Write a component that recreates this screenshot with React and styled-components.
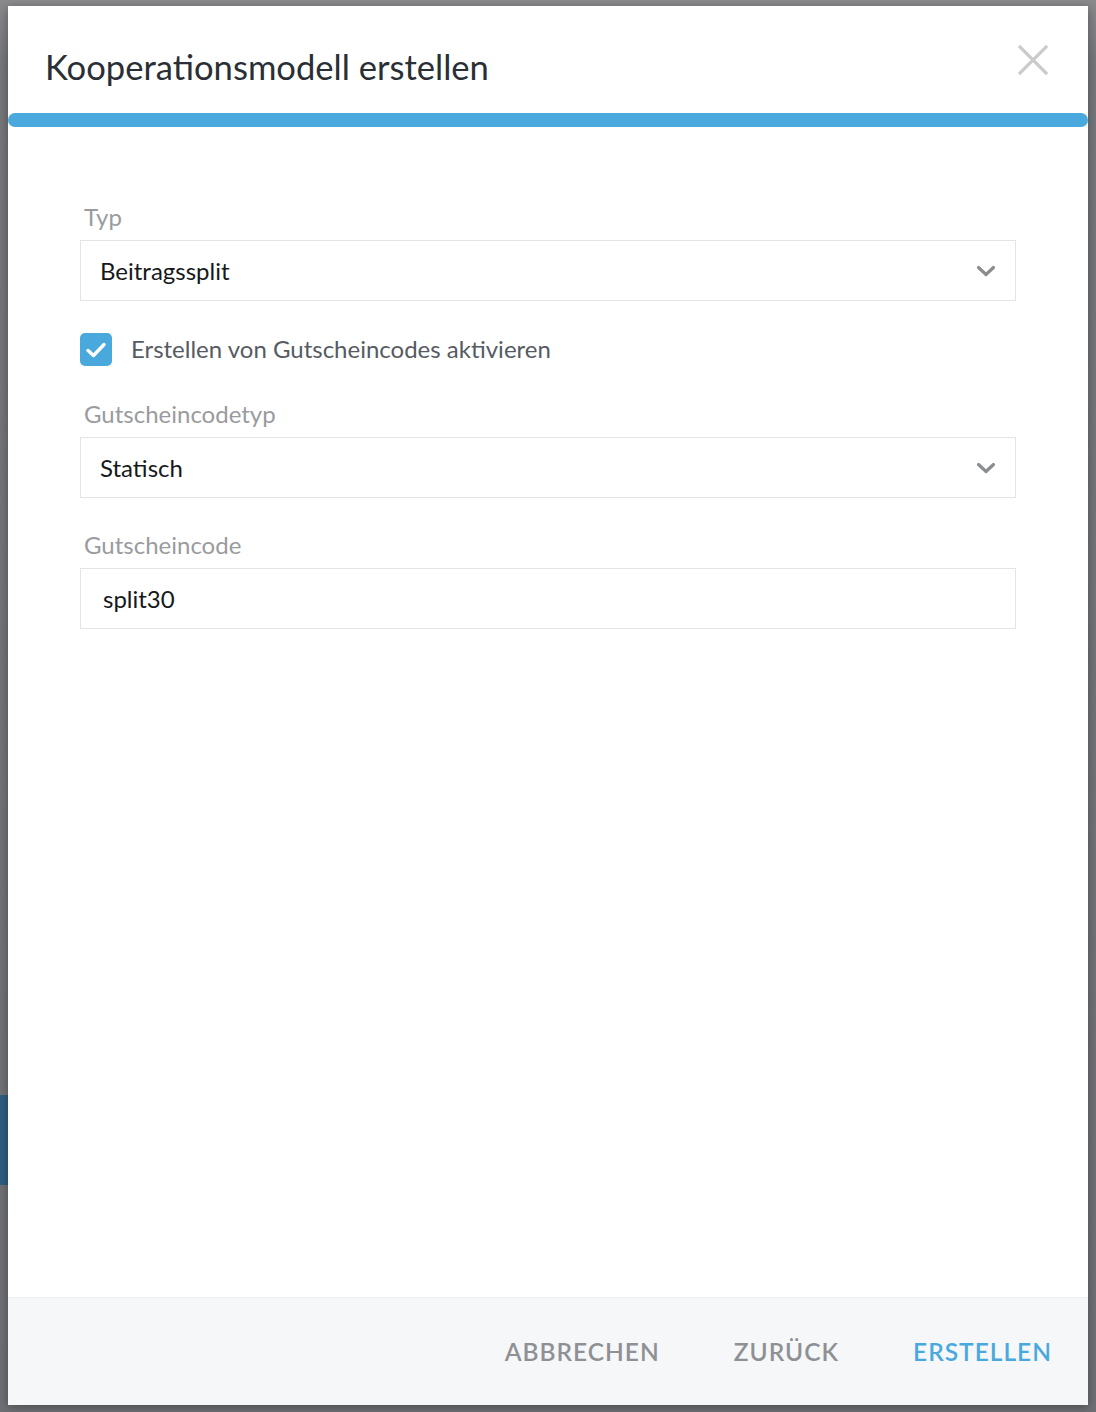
import React from 'react'
import styled, { createGlobalStyle } from 'styled-components'

const GlobalStyle = createGlobalStyle`
  html, body {
    margin: 0;
    padding: 0;
  }
  body {
    background: #707176;
    font-family: "Lato", "Liberation Sans", sans-serif;
  }
`

const ChevronDown = () => (
  <svg width="20" height="12" viewBox="0 0 20 12" fill="none">
    <path d="M2.5 2.5 L10 9.5 L17.5 2.5" stroke="#8c8d91" strokeWidth="3.2" strokeLinecap="round" strokeLinejoin="round" />
  </svg>
)

const CloseIcon = () => (
  <svg width="30" height="30" viewBox="0 0 30 30" fill="none">
    <path d="M2 2 L28 28 M28 2 L2 28" stroke="#cbcbcb" strokeWidth="3.2" strokeLinecap="square" />
  </svg>
)

const CheckIcon = () => (
  <svg width="22" height="18" viewBox="0 0 22 18" fill="none">
    <path d="M3 9.5 L8.5 14.5 L19 3.5" stroke="#ffffff" strokeWidth="3.4" strokeLinecap="round" strokeLinejoin="round" />
  </svg>
)

const App = () => {
  return (
    <>
      <GlobalStyle />
      <Backdrop>
        <SideStrip>
          <SideBar />
        </SideStrip>
        <Modal>
          <Header>
            <Title>Kooperationsmodell erstellen</Title>
            <CloseButton aria-label="Schließen">
              <CloseIcon />
            </CloseButton>
          </Header>
          <Progress />
          <Body>
            <Field>
              <Label>Typ</Label>
              <SelectBox>
                <Value>Beitragssplit</Value>
                <ChevronDown />
              </SelectBox>
            </Field>
            <CheckRow>
              <Checkbox>
                <CheckIcon />
              </Checkbox>
              <CheckLabel>Erstellen von Gutscheincodes aktivieren</CheckLabel>
            </CheckRow>
            <Field>
              <Label>Gutscheincodetyp</Label>
              <SelectBox>
                <Value>Statisch</Value>
                <ChevronDown />
              </SelectBox>
            </Field>
            <Field $top={34}>
              <Label>Gutscheincode</Label>
              <InputBox>
                <Value $indent={3}>split30</Value>
              </InputBox>
            </Field>
          </Body>
          <Footer>
            <FooterButton>ABBRECHEN</FooterButton>
            <FooterButton>ZURÜCK</FooterButton>
            <FooterButton $primary>ERSTELLEN</FooterButton>
          </Footer>
        </Modal>
      </Backdrop>
    </>
  )
}

export default App

const Backdrop = styled.div`
  position: relative;
  width: 1096px;
  height: 1412px;
  padding: 6px 8px 7px 8px;
  box-sizing: border-box;
  background: linear-gradient(to bottom, #8b8b8e 0px, #77787c 60px, #6f7075 100%);
  overflow: hidden;
`

const SideStrip = styled.div`
  position: absolute;
  left: 0;
  top: 0;
  bottom: 0;
  width: 8px;
  display: flex;
  flex-direction: column;
  justify-content: flex-end;
  padding-bottom: 227px;
`

const SideBar = styled.div`
  height: 90px;
  background: #2f5f82;
`

const Modal = styled.div`
  position: relative;
  height: 100%;
  background: #ffffff;
  display: flex;
  flex-direction: column;
  box-shadow: 0 2px 10px rgba(0, 0, 0, 0.35);
`

const Header = styled.div`
  height: 107px;
  display: flex;
  align-items: flex-start;
  justify-content: space-between;
  padding: 0 40px 0 37px;
`

const Title = styled.h1`
  margin: 38px 0 0 0;
  font-size: 34.6px;
  font-weight: 400;
  line-height: 46px;
  color: #2a2f36;
`

const CloseButton = styled.button`
  margin-top: 39px;
  padding: 0;
  border: none;
  background: none;
  width: 30px;
  height: 30px;
  cursor: pointer;
`

const Progress = styled.div`
  height: 14px;
  border-radius: 7px;
  background: #4aa9dc;
`

const Body = styled.div`
  flex: 1;
  padding: 77px 72px 0 72px;
  display: flex;
  flex-direction: column;
`

const Field = styled.div`
  display: flex;
  flex-direction: column;
  gap: 10px;
  margin-top: ${p => p.$top || 0}px;
`

const Label = styled.div`
  padding-left: 4px;
  font-size: 24px;
  line-height: 26px;
  color: #9a9b9e;
`

const SelectBox = styled.div`
  height: 61px;
  box-sizing: border-box;
  border: 1px solid #e3e4e6;
  display: flex;
  align-items: center;
  justify-content: space-between;
  padding: 0 19px 0 19px;
`

const InputBox = styled.div`
  height: 61px;
  box-sizing: border-box;
  border: 1px solid #e3e4e6;
  display: flex;
  align-items: center;
  padding: 0 19px;
`

const Value = styled.span`
  padding-left: ${p => p.$indent || 0}px;
  font-size: 24px;
  color: #16181b;
`

const CheckRow = styled.div`
  display: flex;
  align-items: center;
  gap: 19px;
  margin: 32px 0 35px 0;
`

const Checkbox = styled.div`
  width: 32px;
  height: 33px;
  border-radius: 5px;
  background: #4aa9dc;
  display: flex;
  align-items: center;
  justify-content: center;
`

const CheckLabel = styled.span`
  font-size: 24px;
  line-height: 30px;
  margin-top: -2px;
  color: #565b63;
`

const Footer = styled.div`
  height: 108px;
  box-sizing: border-box;
  background: #f6f7f9;
  border-top: 1px solid #eef0f2;
  display: flex;
  align-items: center;
  justify-content: flex-end;
  gap: 74px;
  padding: 0 36px 0 0;
`

const FooterButton = styled.button`
  border: none;
  background: none;
  padding: 0;
  font-family: "Lato", "Liberation Sans", sans-serif;
  font-size: 24.5px;
  font-weight: 600;
  letter-spacing: 1px;
  color: ${p => (p.$primary ? '#4aa9dc' : '#8f9094')};
  cursor: pointer;
`
